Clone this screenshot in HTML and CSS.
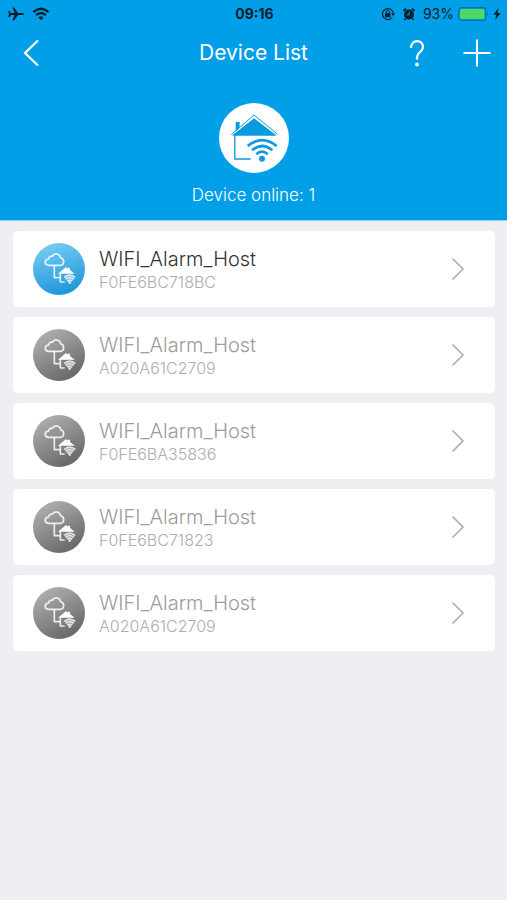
FILE: index.html
```html
<!DOCTYPE html>
<html lang="en">
<head>
<meta charset="utf-8">
<meta name="viewport" content="width=device-width, initial-scale=1">
<title>Device List</title>
<link rel="stylesheet" href="styles.css">
</head>
<body>
<svg class="defs" aria-hidden="true">
  <defs>
    <linearGradient id="blue" x1="0.3" y1="0" x2="0.6" y2="1"><stop offset="0" stop-color="#78cbf5"/><stop offset="1" stop-color="#1b96d8"/></linearGradient>
    <linearGradient id="gray" x1="0.2" y1="0" x2="0.75" y2="1"><stop offset="0" stop-color="#b2b2b2"/><stop offset="1" stop-color="#646464"/></linearGradient>
    <symbol id="host" viewBox="24 23 156 156">
      <g fill="none" stroke="#fff" stroke-opacity=".85" stroke-width="5" stroke-linejoin="round">
        <path d="M70 90C57 88 58 72 71 71C72 63 78 61 82 63C88 52 105 54 107 68C119 69 119 88 107 90Z"/>
        <path d="M88 90V127H104M106 114V140H119"/>
      </g>
      <path d="M99 115L123 95L129 100V97H135V104L149 115Z" fill="#fff"/>
      <path d="M116 125Q134 111 152 125L134 146Z" fill="#fff" fill-opacity=".45"/>
      <g fill="none" stroke="#fff" stroke-opacity=".7" stroke-width="4">
        <path d="M117 126Q134 112 151 126M122 132Q134 122 146 132M127 138Q134 132 141 138"/>
      </g>
      <circle cx="134" cy="142" r="3" fill="#fff"/>
    </symbol>
    <symbol id="chevron" viewBox="0 0 14 24"><path d="M1.5 1.5L12 12L1.5 22.5" fill="none" stroke="currentColor" stroke-width="1.5"/></symbol>
  </defs>
</svg>
<header class="header">
  <div class="status">
    <div class="status-side">
      <svg width="16" height="14" viewBox="0 0 16 14"><path d="M16 7Q16 8 14 8H10L6 13.4H4.5L6.5 8H3L1.4 10H.2L1 7L.2 4H1.4L3 6H6.5L4.5.6H6L10 6H14Q16 6 16 7Z"/></svg>
      <svg width="18" height="14" viewBox="0 0 18 14"><g fill="none" stroke="#06202e" stroke-width="2.2"><path d="M1.3 5.1Q9-1.6 16.700 5.1M4.100 8.200Q9 4 13.900 8.200"/></g><path d="M6.300 10.400Q9 8.200 11.700 10.400L9 13.200Z"/></svg>
    </div>
    <span class="clock">09:16</span>
    <div class="status-side status-right">
      <svg width="14" height="14" viewBox="0 0 14 14"><path d="M11.300 10.500A5.500 5.500 0 1 1 12.200 5.500" fill="none" stroke="#06202e" stroke-width="1.200"/><path d="M10 6.200H14L12.300 9Z"/><rect x="4" y="6.300" width="5.500" height="4" rx=".5"/><path d="M5.200 6.500V5a1.500 1.500 0 0 1 3 0V6.500" fill="none" stroke="#06202e"/></svg>
      <svg class="alarm" width="14" height="14" viewBox="0 0 14 14"><circle cx="7" cy="7.500" r="5"/><path d="M1.500 4L4 1.700M12.500 4L10 1.700M3.500 11.500L2.500 13M10.500 11.500L11.500 13" stroke="#06202e" stroke-width="1.800"/><path d="M7.200 4.500V7.800H4.800" fill="none" stroke="#009fe8"/></svg>
      <span class="percent">93%</span>
      <svg width="31" height="14" viewBox="0 0 31 14"><rect x=".7" y=".7" width="27" height="12.600" rx="3" fill="none" stroke="#0870a8" stroke-width="1.200"/><rect x="2" y="2" width="24.400" height="10" rx="1.500" fill="#4cd964"/><path d="M29 5Q31 7 29 9Z" fill="#0870a8"/></svg>
      <svg width="8" height="12" viewBox="0 0 8 12"><path d="M5.500 0L.3 6.700H3.300L2.200 12L7.700 5H4.500Z"/></svg>
    </div>
  </div>
  <nav class="nav">
    <div class="nav-side">
      <button class="icon-button back" aria-label="Back"><svg width="18" height="28" viewBox="0 0 18 28"><path d="M16 1.500L3 14L16 26.500" fill="none" stroke="#fff" stroke-width="2.200"/></svg></button>
    </div>
    <h1 class="title">Device List</h1>
    <div class="nav-side nav-right">
      <button class="icon-button" aria-label="Help"><svg width="16" height="28" viewBox="0 0 16 28"><path d="M2 9C2 0 14 0 14 8C14 13 8 13.500 8 18V20.500" fill="none" stroke="#fff" stroke-width="2.200"/><circle cx="8" cy="25.500" r="1.900" fill="#fff"/></svg></button>
      <button class="icon-button" aria-label="Add device"><svg width="28" height="28" viewBox="0 0 28 28"><path d="M14 .5V27.500M.5 14H27.500" stroke="#fff" stroke-width="2"/></svg></button>
    </div>
  </nav>
  <div class="summary">
    <svg width="70" height="70" viewBox="12 14 210 210" aria-hidden="true">
      <circle cx="117" cy="119" r="105" fill="#fff"/>
      <g fill="#0a9ae0"><path d="M117 60L183 110V112H53V110Z"/><path d="M62 71H74V88L62 99Z"/><circle cx="141" cy="181" r="9"/></g>
      <g fill="none" stroke="#0a9ae0">
        <path d="M49 109L117 50L188 108" stroke-width="3"/>
        <path d="M59.500 110V182H107" stroke-width="4"/>
        <path d="M98 143Q141 108 185 143M111 156Q141 130 172 156M124 168Q141 152 158 168" stroke-width="8"/>
      </g>
    </svg>
    <p class="online">Device online: 1</p>
  </div>
</header>
<main class="list">
  <a class="card card-on" href="#"><svg class="avatar" viewBox="0 0 52 52" aria-hidden="true"><circle cx="26" cy="26" r="26" fill="url(#blue)"/><use href="#host"/></svg><span class="info"><span class="name">WIFI_Alarm_Host</span><span class="mac">F0FE6BC718BC</span></span><svg class="chevron" aria-hidden="true"><use href="#chevron"/></svg></a>
  <a class="card" href="#"><svg class="avatar" viewBox="0 0 52 52" aria-hidden="true"><circle cx="26" cy="26" r="26" fill="url(#gray)"/><use href="#host"/></svg><span class="info"><span class="name">WIFI_Alarm_Host</span><span class="mac">A020A61C2709</span></span><svg class="chevron" aria-hidden="true"><use href="#chevron"/></svg></a>
  <a class="card" href="#"><svg class="avatar" viewBox="0 0 52 52" aria-hidden="true"><circle cx="26" cy="26" r="26" fill="url(#gray)"/><use href="#host"/></svg><span class="info"><span class="name">WIFI_Alarm_Host</span><span class="mac">F0FE6BA35836</span></span><svg class="chevron" aria-hidden="true"><use href="#chevron"/></svg></a>
  <a class="card" href="#"><svg class="avatar" viewBox="0 0 52 52" aria-hidden="true"><circle cx="26" cy="26" r="26" fill="url(#gray)"/><use href="#host"/></svg><span class="info"><span class="name">WIFI_Alarm_Host</span><span class="mac">F0FE6BC71823</span></span><svg class="chevron" aria-hidden="true"><use href="#chevron"/></svg></a>
  <a class="card" href="#"><svg class="avatar" viewBox="0 0 52 52" aria-hidden="true"><circle cx="26" cy="26" r="26" fill="url(#gray)"/><use href="#host"/></svg><span class="info"><span class="name">WIFI_Alarm_Host</span><span class="mac">A020A61C2709</span></span><svg class="chevron" aria-hidden="true"><use href="#chevron"/></svg></a>
</main>
</body>
</html>
```
FILE: styles.css
```css
* { box-sizing: border-box; }
body { margin: 0; min-height: 100vh; background: #eeeef3; font-family: Inter, "Liberation Sans", sans-serif; }
.defs { position: absolute; width: 0; height: 0; }
svg { display: block; flex: none; }
.header { background: #009fe8; color: #fff; padding-bottom: 15px; border-bottom: 1px solid #8fd3f3; }
.status { display: flex; align-items: center; height: 28px; padding: 0 6px; color: #06202e; fill: #06202e; font-size: 14px; line-height: 20px; }
.status-side { flex: 1; display: flex; align-items: center; gap: 8px; padding-left: 2px; }
.status-right { justify-content: flex-end; gap: 4px; padding-left: 0; }
.alarm { margin: 0 3px; }
.clock { font-weight: 700; }
.nav { display: flex; align-items: center; height: 49px; padding: 0 16px; }
.nav-side { flex: 1; display: flex; align-items: center; }
.nav-right { justify-content: flex-end; gap: 38px; }
.icon-button { padding: 0; border: 0; background: none; cursor: pointer; }
.back { padding-left: 6px; }
.title { margin: 0; font-size: 21px; line-height: 28px; font-weight: 400; }
.summary { display: flex; flex-direction: column; align-items: center; gap: 12px; padding-top: 26px; }
.online { margin: 0; font-size: 17px; line-height: 20px; font-weight: 300; }
.list { display: flex; flex-direction: column; gap: 10px; padding: 10px 12px 10px 13px; }
.card { display: flex; align-items: center; min-height: 76px; padding: 10px 30px 10px 20px; gap: 14px; border-radius: 5px; background: #fff; color: #aaa; text-decoration: none; }
.avatar { width: 52px; height: 52px; }
.info { flex: 1; display: flex; flex-direction: column; }
.name { font-size: 20px; line-height: 26px; font-weight: 300; color: #9c9c9c; }
.card-on .name { color: #333; }
.mac { font-size: 16px; line-height: 20px; font-weight: 300; color: #adadad; }
.chevron { width: 14px; height: 24px; color: #aaa; }
```
